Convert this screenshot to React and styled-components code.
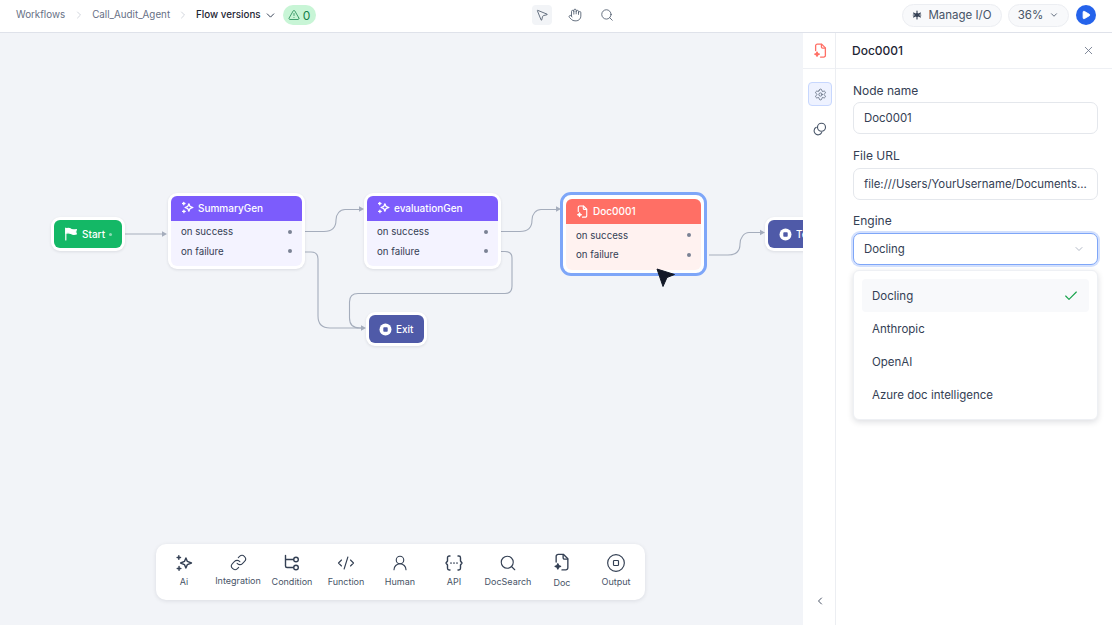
import React from "react";
import styled, { createGlobalStyle } from "styled-components";
import {
  ChevronDown, ChevronLeft, ChevronRight, TriangleAlert, MousePointer2, Hand, Search,
  Play, X, Check, Settings, Link, CodeXml, UserRound, CircleStop,
} from "lucide-react";

const Global = createGlobalStyle`
  html, body { margin: 0; padding: 0; width: 1112px; height: 625px; overflow: hidden; background: #fff; }
  * { box-sizing: border-box; }
  body { font-family: Inter, "Liberation Sans", sans-serif; -webkit-font-smoothing: antialiased; }
`;

const Page = styled.div`
  width: 1112px; height: 625px; display: flex; flex-direction: column; overflow: hidden;
`;
const TopBar = styled.header`
  height: 33px; flex: none; display: flex; align-items: center; background: #fff;
  border-bottom: 1px solid #dfe2ea; padding: 0 16px 2px;
`;
const Crumbs = styled.nav`
  width: 516px; flex: none; display: flex; align-items: center;
`;
const Crumb = styled.span`
  font-size: 9.8px; line-height: 14px; white-space: nowrap;
  color: ${p => (p.$active ? "#1d2433" : "#667085")};
  font-weight: ${p => (p.$active ? 500 : 400)};
`;
const CrumbSep = styled.span`
  display: flex; width: ${p => p.$w}px; justify-content: center; color: #c3c8d2;
`;
const VersionCaret = styled.span`
  display: flex; margin-left: 3px; color: #344054;
`;
const Badge = styled.span`
  margin-left: 6px; height: 20px; width: 33px; border-radius: 10px; background: #c8f5d6; color: #14804a;
  display: flex; align-items: center; justify-content: center; gap: 3px; font-size: 12px;
`;
const Tools = styled.div`
  display: flex; align-items: center; gap: 12.5px;
`;
const ToolBtn = styled.span`
  width: 20px; height: 20px; border-radius: 4px; display: flex; align-items: center; justify-content: center;
  color: #475467; background: ${p => (p.$active ? "#f2f4f7" : "transparent")};
`;
const RightActions = styled.div`
  margin-left: auto; display: flex; align-items: center;
`;
const Pill = styled.span`
  height: 23px; display: flex; align-items: center; border-radius: 12px; background: #f8f9fb; border: 1px solid #eceef2;
  color: #475467; font-size: 11.5px; gap: ${p => p.$gap}px; width: ${p => p.$w}px; justify-content: center; margin-right: 6px;
`;
const RunBtn = styled.span`
  width: 20px; height: 20px; border-radius: 50%; background: #2563eb; color: #fff;
  display: flex; align-items: center; justify-content: center; margin-left: 1px;
`;

const Body = styled.div`
  flex: 1; display: flex; min-height: 0;
`;
const Canvas = styled.main`
  position: relative; width: 803px; flex: none; background: #f2f4f8; overflow: hidden;
`;
const Edges = styled.svg`
  position: absolute; left: 0; top: 0; width: 803px; height: 592px;
`;
const EdgePath = styled.path`
  fill: none; stroke: #a5adbc; stroke-width: 1.1;
`;
const ArrowHead = styled.path`
  fill: #a5adbc;
`;
const Shell = styled.div`
  position: absolute; left: ${p => p.$x}px; top: ${p => p.$y}px; width: ${p => p.$w}px; height: ${p => p.$h}px;
  background: #fff; border-radius: 9px; padding: 3px;
  box-shadow: 0 1px 3px rgba(16, 24, 40, 0.1);
`;
const Selected = styled(Shell)`
  border-radius: 11px; border: 3px solid #7ea6f8; padding: 4px 3px 3px; box-shadow: none;
`;
const Pin = styled.div`
  height: 100%; border-radius: 6px; display: flex; align-items: center; color: #fff; font-size: 10px; font-weight: 500;
  background: ${p => p.$bg}; padding-left: ${p => p.$pl}px; gap: ${p => p.$gap}px; white-space: nowrap; overflow: hidden;
`;
const Dot = styled.span`
  width: 3px; height: 3px; border-radius: 50%; background: rgba(255,255,255,.5);
`;
const Card = styled.div`
  height: 100%; border-radius: 6px; overflow: hidden; display: flex; flex-direction: column; background: ${p => p.$tint};
`;
const CardHead = styled.div`
  height: ${p => p.$h}px; flex: none; background: ${p => p.$bg}; color: #fff; display: flex; align-items: center;
  gap: 4px; padding: 0 0 1px 10px; font-size: 10px; font-weight: 500;
`;
const CardRows = styled.div`
  padding: 1.5px 10px 0; display: flex; flex-direction: column;
`;
const CardRow = styled.div`
  height: 19.5px; display: flex; align-items: center; justify-content: space-between; font-size: 9.7px; color: #344054;
`;
const RowDot = styled.span`
  width: 4px; height: 4px; border-radius: 50%; background: #7a8294;
`;
const Cursor = styled.svg`
  position: absolute; left: 655px; top: 234px; width: 22px; height: 22px;
`;

const Palette = styled.div`
  position: absolute; left: 156px; top: 511px; width: 489px; height: 56px; border-radius: 10px; background: #fff;
  box-shadow: 0 1px 4px rgba(16, 24, 40, 0.1); display: flex; padding-left: 1px;
`;
const PaletteItem = styled.div`
  width: 54px; flex: none; display: flex; flex-direction: column; align-items: center; color: #344054;
  padding-top: ${p => p.$pt || 10}px;
`;
const PaletteLabel = styled.span`
  font-size: 9px; line-height: 12px; color: #475467; margin-top: ${p => p.$mt || 4}px; white-space: nowrap;
`;

const Rail = styled.aside`
  width: 33px; flex: none; background: #fff; border-right: 1px solid #eceef2; display: flex; flex-direction: column; align-items: center;
`;
const RailTop = styled.div`
  height: 36px; width: 100%; flex: none; display: flex; align-items: center; justify-content: center; border-bottom: 1px solid #eef0f4;
  padding-left: 2px; color: #ff6f65;
`;
const RailBtn = styled.span`
  width: 24px; height: 24px; border-radius: 4px; display: flex; align-items: center; justify-content: center; color: #475467;
  background: ${p => (p.$active ? "#eef2ff" : "transparent")};
  border: 1px solid ${p => (p.$active ? "#c7d7fe" : "transparent")};
  margin: ${p => p.$mt}px 0 0 2px;
`;
const RailBottom = styled.span`
  margin: auto 0 18px 2px; display: flex; color: #344054;
`;
const Panel = styled.section`
  width: 276px; min-width: 0; flex: none; background: #fff; display: flex; flex-direction: column;
`;
const PanelHead = styled.div`
  height: 36px; flex: none; border-bottom: 1px solid #eef0f4; display: flex; align-items: center; justify-content: space-between;
  padding: 0 17px 0 16px; font-size: 12px; font-weight: 500; color: #1d2433;
`;
const CloseBtn = styled.span`
  display: flex; color: #667085;
`;
const Form = styled.div`
  padding: 14px 14px 0 17px; display: flex; flex-direction: column; min-width: 0;
`;
const Label = styled.label`
  font-size: 12px; line-height: 15px; color: #344054; margin-bottom: ${p => p.$mb || 4}px; margin-top: ${p => p.$mt || 0}px;
`;
const Field = styled.div`
  height: 32px; border-radius: 7px; border: 1px solid #e4e7ec; display: flex; align-items: center; padding: 0 10px;
  font-size: 11.4px; color: #344054; background: #fff; white-space: nowrap; overflow: hidden;
`;
const SelectBox = styled(Field)`
  justify-content: space-between; border-color: #7ea6f8; box-shadow: 0 0 0 2px #d3e0fd; overflow: visible; padding-right: 12px;
`;
const SelectCaret = styled.span`
  display: flex; color: #98a2b3;
`;
const Menu = styled.div`
  margin-top: 5px; height: 150px; border-radius: 6px; border: 1px solid #eef0f4; background: #fff; padding: 8px 8px 0;
  box-shadow: 0 2px 6px rgba(16, 24, 40, 0.14); display: flex; flex-direction: column;
`;
const MenuItem = styled.div`
  height: 33px; flex: none; border-radius: 4px; padding: 0 10px; display: flex; align-items: center; justify-content: space-between;
  font-size: 11.5px; color: #344054; background: ${p => (p.$on ? "#f8f9fb" : "transparent")};
`;
const CheckMark = styled.span`
  display: flex; color: #16a34a;
`;

const Sparkle = ({ size = 14, sw = 1.6 }) => (
  <svg width={size} height={size} viewBox="0 0 16 16" fill="none" stroke="currentColor" strokeWidth={sw} strokeLinecap="round" strokeLinejoin="round">
    <path d="M9.7 3.5 11 6.6 14.6 8l-3.6 1.4-1.3 3.1-1.3-3.1L5 8l3.4-1.4z" />
    <path d="M3.4 1.6v3M1.9 3.1h3M3.6 11.2v3.2M2 12.8h3.2" />
  </svg>
);
const DocIcon = ({ size = 14, sw = 1.4 }) => (
  <svg width={size} height={size} viewBox="0 0 16 16" fill="none" stroke="currentColor" strokeWidth={sw} strokeLinecap="round" strokeLinejoin="round">
    <path d="M2.8 8V3a1.8 1.8 0 0 1 1.8-1.8h4.6l4 4v8a1.8 1.8 0 0 1-1.8 1.8H8" />
    <path d="M9 1.4v2.8a1.2 1.2 0 0 0 1.2 1.2H13" />
    <path d="M4.3 9.6 5 11.2l1.7.7-1.7.7-.7 1.6-.7-1.6-1.7-.7 1.7-.7z" fill="currentColor" />
  </svg>
);
const FlagIcon = () => (
  <svg width="14" height="14" viewBox="0 0 14 14" fill="#fff" stroke="#fff" strokeWidth="1.2" strokeLinejoin="round" strokeLinecap="round">
    <path d="M1.8 1.2v11.8" fill="none" />
    <path d="M1.8 1.800c2.200-.9 4-.5 5.300.4 1.300.8 3.100.9 5.300.5-.9 1.400-.9 2.800 0 4.300-2.300.6-4 .4-5.300-.4-1.400-.8-3.100-1.200-5.300-.3z" />
  </svg>
);
const StopDisc = () => (
  <svg width="13" height="13" viewBox="0 0 13 13">
    <circle cx="6.500" cy="6.500" r="6" fill="#fff" />
    <rect x="4.300" y="4.300" width="4.400" height="4.400" rx="0.800" fill="#4f5aa8" />
  </svg>
);
const Burst = () => (
  <svg width="10" height="10" viewBox="0 0 10 10" stroke="#344054" strokeWidth="1.100" strokeLinecap="round">
    <path d="M5 1v8M1.500 3 8.500 7M1.500 7l7-4M1.200 5h7.600" />
    <circle cx="5" cy="5" r="2" fill="#344054" stroke="none" />
  </svg>
);
const BranchIcon = () => (
  <svg width="18" height="18" viewBox="0 0 18 18" fill="none" stroke="currentColor" strokeWidth="1.400" strokeLinecap="round" strokeLinejoin="round">
    <path d="M2.500 1.500v10.500a1.500 1.500 0 0 0 1.500 1.500h6.500M2.500 5.500h8" />
    <circle cx="13" cy="5.500" r="2.300" />
    <circle cx="13" cy="13.500" r="2.300" />
  </svg>
);
const ApiIcon = () => (
  <svg width="18" height="18" viewBox="0 0 18 18" fill="none" stroke="currentColor" strokeWidth="1.400" strokeLinecap="round" strokeLinejoin="round">
    <path d="M5 2H4.200A1.700 1.700 0 0 0 2.500 3.700V7L1 9l1.500 2v3.300A1.700 1.700 0 0 0 4.200 16H5" />
    <path d="M13 2h.8a1.700 1.700 0 0 1 1.700 1.700V7L17 9l-1.500 2v3.300a1.700 1.700 0 0 1-1.700 1.700H13" />
    <path d="M6 9h.01M9 9h.01M12 9h.01" strokeWidth="1.700" />
  </svg>
);
const OverlapIcon = () => (
  <svg width="14" height="14" viewBox="0 0 14 14" fill="none" stroke="currentColor" strokeWidth="1.100" strokeLinecap="round">
    <circle cx="8.500" cy="5.300" r="4" />
    <path d="M3.300 5.300a4 4 0 1 0 5.400 5.300" />
  </svg>
);

const ROWS = ["on success", "on failure"];
const FlowCard = ({ x, y, title, icon }) => (
  <Shell $x={x} $y={y} $w={137} $h={76}>
    <Card $tint="#f4f3ff">
      <CardHead $bg="#7c5cfc" $h={24.5}>{icon}{title}</CardHead>
      <CardRows>
        {ROWS.map(r => <CardRow key={r}>{r}<RowDot /></CardRow>)}
      </CardRows>
    </Card>
  </Shell>
);

const ARROWS = ["M167 201 162 198.300v5.400z", "M364 176 359 173.300v5.400z", "M561 176 556 173.300v5.400z", "M366 295 361 292.300v5.400z", "M765 199.500 760 196.800v5.400z"];
const EDGES = [
  "M125 201H163",
  "M305 198.500H324C333 198.500 336 193 336 187C336 181 340 176.500 345 176.500H360",
  "M501 198.500H520C529 198.500 532 193 532 187C532 181 536 176.500 541 176.500H557",
  "M709 222H728C737 222 740 217 740 211C740 205 744 199.500 749 199.500H761",
  "M305 219H311Q318 219 318 226V283Q318 295 330 295H362",
  "M501 218.500H505Q512 218.500 512 225V253Q512 260.500 505 260.500H358Q349.500 260.500 349.500 269V285Q349.500 295 360 295H362",
];

const PALETTE = [
  ["Ai", <Sparkle size={18} sw={1.300} />],
  ["Integration", <Link size={17} strokeWidth={1.500} />],
  ["Condition", <BranchIcon />],
  ["Function", <CodeXml size={18} strokeWidth={1.500} />],
  ["Human", <UserRound size={18} strokeWidth={1.500} />],
  ["API", <ApiIcon />],
  ["DocSearch", <Search size={18} strokeWidth={1.500} />],
  ["Doc", <DocIcon size={18} sw={1.200} />, 9, 6],
  ["Output", <CircleStop size={20} strokeWidth={1.400} />, 9, 3],
];

export default function App() {
  return (
    <Page>
      <Global />
      <TopBar>
        <Crumbs>
          <Crumb>Workflows</Crumb>
          <CrumbSep $w={27}><ChevronRight size={12} strokeWidth={1.500} /></CrumbSep>
          <Crumb>Call_Audit_Agent</Crumb>
          <CrumbSep $w={26}><ChevronRight size={12} strokeWidth={1.500} /></CrumbSep>
          <Crumb $active>Flow versions</Crumb>
          <VersionCaret><ChevronDown size={13} strokeWidth={1.800} /></VersionCaret>
          <Badge><TriangleAlert size={12} strokeWidth={1.500} />0</Badge>
        </Crumbs>
        <Tools>
          <ToolBtn $active><MousePointer2 size={14} strokeWidth={1.400} /></ToolBtn>
          <ToolBtn><Hand size={14} strokeWidth={1.400} /></ToolBtn>
          <ToolBtn><Search size={14} strokeWidth={1.400} /></ToolBtn>
        </Tools>
        <RightActions>
          <Pill $w={100} $gap={6}><Burst />Manage I/O</Pill>
          <Pill $w={61} $gap={6}>36%<ChevronDown size={10} strokeWidth={2} /></Pill>
          <RunBtn><Play size={10} fill="#fff" strokeWidth={2} /></RunBtn>
        </RightActions>
      </TopBar>
      <Body>
        <Canvas>
          <Edges viewBox="0 0 803 592">
            {EDGES.map(d => <EdgePath key={d} d={d} />)}
            {ARROWS.map(d => <ArrowHead key={d} d={d} />)}
          </Edges>
          <Shell $x={51} $y={184} $w={74} $h={34}>
            <Pin $bg="#14b866" $pl={10} $gap={4}><FlagIcon />Start<Dot /></Pin>
          </Shell>
          <FlowCard x={168} y={160} title="SummaryGen" icon={<Sparkle size={13} />} />
          <FlowCard x={364} y={160} title="evaluationGen" icon={<Sparkle size={13} />} />
          <Selected $x={560} $y={159} $w={147} $h={84}>
            <Card $tint="#fff2f0">
              <CardHead $bg="#ff6f65" $h={25}><DocIcon size={13} />Doc0001</CardHead>
              <CardRows>
                {ROWS.map(r => <CardRow key={r}>{r}<RowDot /></CardRow>)}
              </CardRows>
            </Card>
          </Selected>
          <Shell $x={366} $y={279} $w={61} $h={34}>
            <Pin $bg="#4f5aa8" $pl={10} $gap={4}><StopDisc />Exit</Pin>
          </Shell>
          <Shell $x={765} $y={184} $w={60} $h={34}>
            <Pin $bg="#4f5aa8" $pl={11} $gap={4}><StopDisc />Te</Pin>
          </Shell>
          <Cursor viewBox="0 0 22 22">
            <path d="M2 2 19.500 7.500 12 10.500 8 19.500z" fill="#111827" stroke="#111827" strokeLinejoin="round" />
          </Cursor>
          <Palette>
            {PALETTE.map(([label, icon, pt, mt]) => (
              <PaletteItem key={label} $pt={pt}>
                {icon}
                <PaletteLabel $mt={mt}>{label}</PaletteLabel>
              </PaletteItem>
            ))}
          </Palette>
        </Canvas>
        <Rail>
          <RailTop><DocIcon size={15} /></RailTop>
          <RailBtn $active $mt={13}><Settings size={13} strokeWidth={1.300} /></RailBtn>
          <RailBtn $mt={11}><OverlapIcon /></RailBtn>
          <RailBottom><ChevronLeft size={12} strokeWidth={1.800} /></RailBottom>
        </Rail>
        <Panel>
          <PanelHead>Doc0001<CloseBtn><X size={13} strokeWidth={1.500} /></CloseBtn></PanelHead>
          <Form>
            <Label>Node name</Label>
            <Field>Doc0001</Field>
            <Label $mt={14} $mb={5}>File URL</Label>
            <Field>file:///Users/YourUsername/Documents...</Field>
            <Label $mt={13} $mb={5}>Engine</Label>
            <SelectBox>Docling<SelectCaret><ChevronDown size={12} strokeWidth={1.500} /></SelectCaret></SelectBox>
            <Menu>
              <MenuItem $on>Docling<CheckMark><Check size={16} strokeWidth={1.700} /></CheckMark></MenuItem>
              <MenuItem>Anthropic</MenuItem>
              <MenuItem>OpenAI</MenuItem>
              <MenuItem>Azure doc intelligence</MenuItem>
            </Menu>
          </Form>
        </Panel>
      </Body>
    </Page>
  );
}
